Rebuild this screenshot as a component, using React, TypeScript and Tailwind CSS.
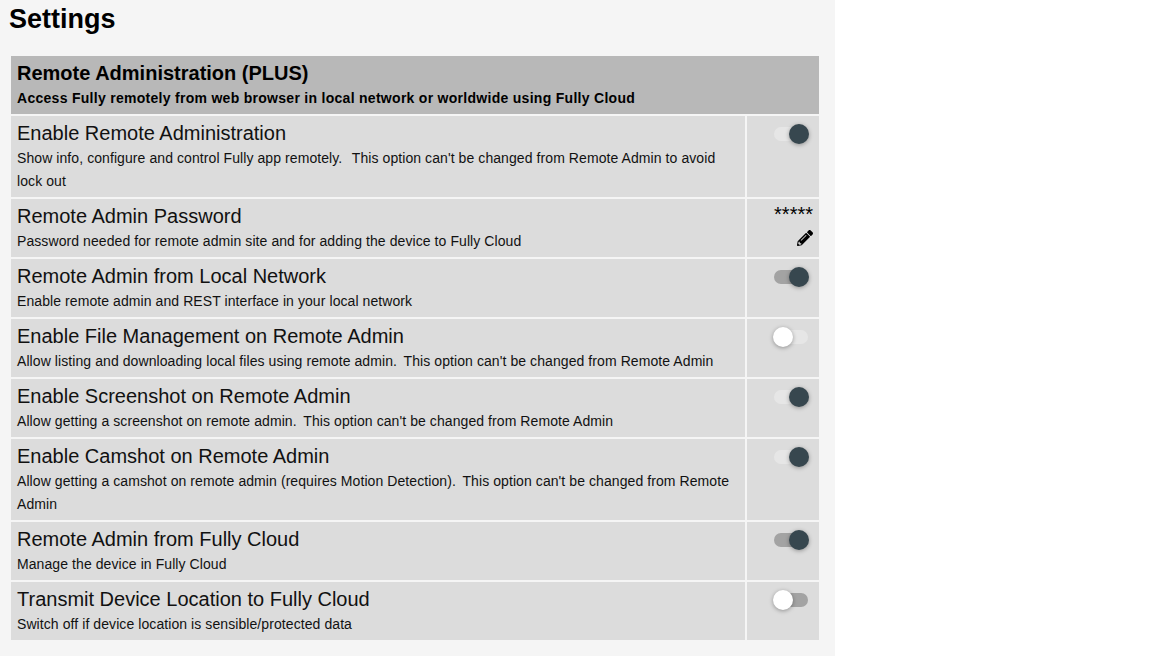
import { FaPencilAlt } from 'react-icons/fa'

const rows = [
  { title: 'Enable Remote Administration', desc: "Show info, configure and control Fully app remotely.\u2009\u2009 This option can't be changed from Remote Admin to avoid lock out", h: 'h-[81px]', kind: 'on-light' },
  { title: 'Remote Admin Password', desc: 'Password needed for remote admin site and for adding the device to Fully Cloud', h: 'h-[58px]', kind: 'password' },
  { title: 'Remote Admin from Local Network', desc: 'Enable remote admin and REST interface in your local network', h: 'h-[58px]', kind: 'on' },
  { title: 'Enable File Management on Remote Admin', desc: "Allow listing and downloading local files using remote admin.\u2009 This option can't be changed from Remote Admin", h: 'h-[58px]', kind: 'off-light' },
  { title: 'Enable Screenshot on Remote Admin', desc: "Allow getting a screenshot on remote admin.\u2009 This option can't be changed from Remote Admin", h: 'h-[58px]', kind: 'on-light' },
  { title: 'Enable Camshot on Remote Admin', desc: "Allow getting a camshot on remote admin (requires Motion Detection).\u2009 This option can't be changed from Remote Admin", h: 'h-[81px]', kind: 'on-light' },
  { title: 'Remote Admin from Fully Cloud', desc: 'Manage the device in Fully Cloud', h: 'h-[58px]', kind: 'on' },
  { title: 'Transmit Device Location to Fully Cloud', desc: 'Switch off if device location is sensible/protected data', h: 'h-[58px]', kind: 'off' },
]

function Toggle({ kind }: { kind: string }) {
  const on = kind.startsWith('on')
  const light = kind.endsWith('light')
  return (
    <div className={`flex items-center w-[34px] h-[14px] rounded-full ${light ? 'bg-[#e6e6e6]' : 'bg-[#a3a3a3]'} ${on ? 'justify-end' : 'justify-start'}`}>
      <div
        className={`w-5 h-5 rounded-full shrink-0 shadow-[0_1px_4px_rgba(0,0,0,0.35)] ${
          on ? 'bg-[#37474f] mr-[-1px]' : 'bg-white ml-[-1px]'
        }`}
      />
    </div>
  )
}

export default function App() {
  return (
    <div className="w-[835px] h-[656px] bg-[#f5f5f5] overflow-hidden font-['Liberation_Sans',Arial,sans-serif] text-[#111]">
      <h1 className="pl-[9px] pt-[3px] h-[56px] text-[27px] leading-[33px] font-bold text-black">Settings</h1>
      <div className="ml-[11px] w-[808px] flex flex-col gap-[2px]">
        <div className="h-[58px] bg-[#b8b8b8] px-[6px] pt-[5px] text-black">
          <div className="text-[20px] leading-[24px] font-bold">Remote Administration (PLUS)</div>
          <div className="mt-[2px] text-[14px] leading-[23px] font-bold tracking-[0.285px]">Access Fully remotely from web browser in local network or worldwide using Fully Cloud</div>
        </div>
        {rows.map((r) => (
          <div key={r.title} className={`flex gap-[2px] ${r.h}`}>
            <div className="w-[734px] bg-[#dcdcdc] px-[6px] pt-[5px]">
              <div className="text-[20px] leading-[24px]">{r.title}</div>
              <div className="mt-[2px] text-[14px] leading-[23px] tracking-[0.08px]">{r.desc}</div>
            </div>
            <div className="flex-1 bg-[#dcdcdc]">
              {r.kind === 'password' ? (
                <div className="flex flex-col items-end pr-[6px] pt-[4px] text-black">
                  <div className="text-[20px] leading-[23px]">*****</div>
                  <FaPencilAlt className="mt-[4px] w-4 h-4" />
                </div>
              ) : (
                <div className="pl-[27px] pt-[11px]">
                  <Toggle kind={r.kind} />
                </div>
              )}
            </div>
          </div>
        ))}
      </div>
    </div>
  )
}
